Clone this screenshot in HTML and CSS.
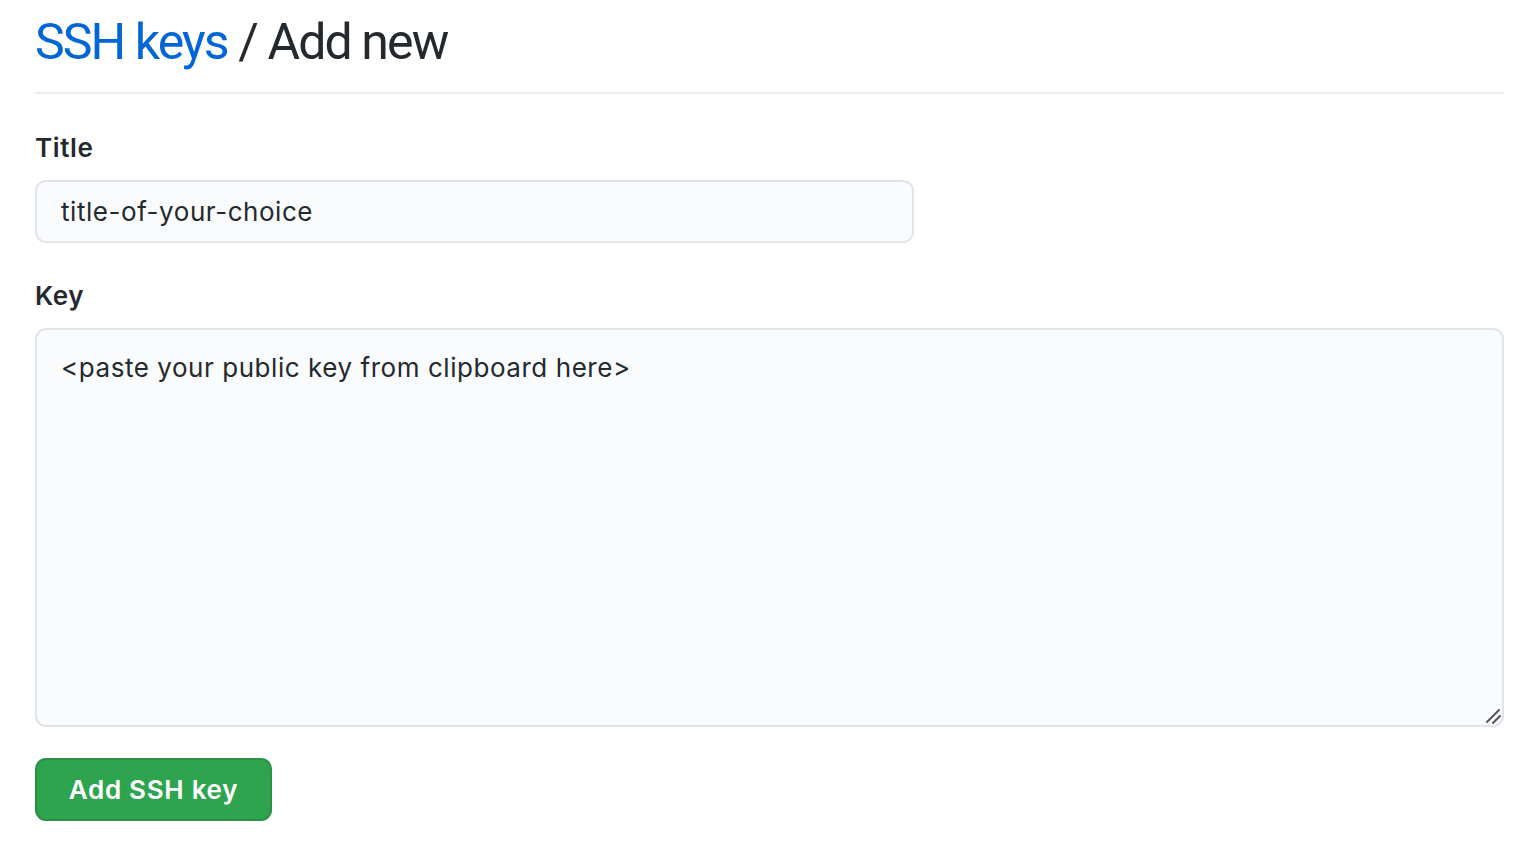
FILE: index.html
```html
<!DOCTYPE html>
<html lang="en">
<head>
<meta charset="utf-8">
<title>SSH keys / Add new</title>
<link rel="stylesheet" href="styles.css">
</head>
<body>
<main class="page">
  <h1 class="page-head"><a class="crumb" href="#">SSH keys</a> / Add new</h1>
  <form class="form">
    <div class="field">
      <label class="label" for="title">Title</label>
      <input class="input" id="title" type="text" value="title-of-your-choice">
    </div>
    <div class="field field-key">
      <label class="label" for="key">Key</label>
      <div class="textarea-wrap">
        <textarea class="textarea" id="key">&lt;paste your public key from clipboard here&gt;</textarea>
        <svg class="grip" width="16" height="16" viewBox="0 0 16 16" aria-hidden="true">
          <path d="M2 14 L14 2 M8 15 L15 8" stroke="#555" stroke-width="2" stroke-linecap="round" fill="none"/>
        </svg>
      </div>
    </div>
    <button class="btn" type="button">Add SSH key</button>
  </form>
</main>
</body>
</html>
```
FILE: styles.css
```css
* { box-sizing: border-box; }
html, body { margin: 0; background: #fff; }
body {
  font-family: Inter, "Noto Sans", sans-serif;
  color: #24292e;
}
.page {
  width: 1469px;
  margin-left: 35px;
}
.page-head {
  margin: 0;
  padding-top: 12px;
  height: 94px;
  font-family: Roboto, "Liberation Sans", sans-serif;
  font-size: 50px;
  font-weight: 400;
  line-height: 60px;
  letter-spacing: -1.9px;
  border-bottom: 2px solid #eaecef;
  color: #24292e;
}
.crumb { color: #0366d6; text-decoration: none; }
.form {
  display: flex;
  flex-direction: column;
  padding-top: 34px;
}
.field {
  display: flex;
  flex-direction: column;
  margin-bottom: 33px;
}
.field-key { margin-bottom: 31px; }
.label {
  font-size: 26px;
  font-weight: 600;
  line-height: 40px;
  letter-spacing: 0.6px;
  margin-bottom: 12px;
}
.input, .textarea {
  font-family: Inter, "Noto Sans", sans-serif;
  font-size: 26px;
  letter-spacing: 0.55px;
  color: #24292e;
  background: #fafbfc;
  border: 2px solid #e1e4e8;
  border-radius: 11px;
  outline: none;
}
.input {
  width: 879px;
  height: 63px;
  padding: 0 24px;
}
.textarea-wrap {
  position: relative;
  width: 1469px;
  height: 399px;
}
.textarea {
  display: block;
  width: 100%;
  height: 100%;
  padding: 20px 24px;
  line-height: 36px;
  resize: none;
}
.grip {
  position: absolute;
  right: 3px;
  bottom: 3px;
}
.btn {
  align-self: flex-start;
  width: 237px;
  height: 63px;
  padding: 0;
  font-family: Inter, "Noto Sans", sans-serif;
  font-size: 26px;
  font-weight: 600;
  letter-spacing: 0.7px;
  color: #fff;
  background: #2ea44f;
  border: 2px solid rgba(27, 31, 35, 0.15);
  border-radius: 11px;
  cursor: pointer;
}
```
